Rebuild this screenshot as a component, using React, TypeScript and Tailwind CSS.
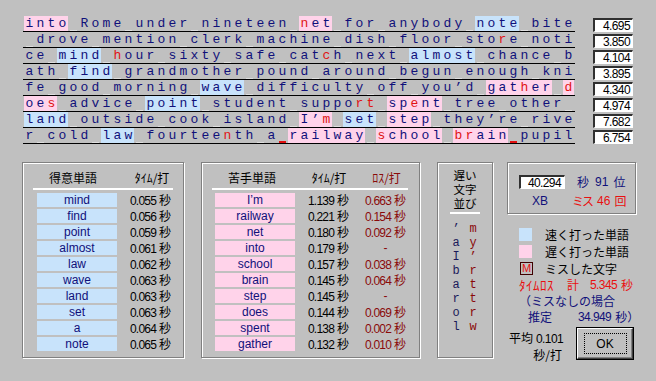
import React from "react";

type Row = {
  t: string;
  pink?: [number, number][];
  blue?: [number, number][];
  red?: number[];
  miss?: number[];
};

const rows: Row[] = [
  { t: "into Rome under nineteen net for anybody note bite", pink: [[0, 3], [25, 27]], blue: [[41, 44]], red: [25] },
  { t: " drove mention clerk machine dish floor store noti", red: [43] },
  { t: "ce mind hour sixty safe catch next almost chance b", blue: [[3, 6], [35, 40]], red: [8, 27] },
  { t: "ath find grandmother pound around begun enough kni", blue: [[4, 7]] },
  { t: "fe good morning wave difficulty off you’d gather d", blue: [[16, 19]], pink: [[42, 47], [49, 49]], red: [45, 49] },
  { t: "oes advice point student support spent tree other ", pink: [[0, 2], [33, 37]], blue: [[11, 15]], red: [2, 30, 31, 35] },
  { t: "land outside cook island I’m set step they’re rive", blue: [[0, 3], [29, 31]], pink: [[25, 27], [33, 36]], red: [27] },
  { t: "r cold law fourteenth a railway school brain pupil", blue: [[7, 9]], pink: [[24, 30], [32, 37], [39, 43]], red: [18, 32, 39, 40], miss: [23, 44] },
];

const times = ["4.695", "3.850", "4.104", "3.895", "4.340", "4.974", "7.682", "6.754"];

const good: [string, string][] = [
  ["mind", "0.055"], ["find", "0.056"], ["point", "0.059"], ["almost", "0.061"], ["law", "0.062"],
  ["wave", "0.063"], ["land", "0.063"], ["set", "0.063"], ["a", "0.064"], ["note", "0.065"],
];

const bad: [string, string, string | null][] = [
  ["I’m", "1.139", "0.663"], ["railway", "0.221", "0.154"], ["net", "0.180", "0.092"], ["into", "0.179", null],
  ["school", "0.157", "0.038"], ["brain", "0.145", "0.064"], ["step", "0.145", null], ["does", "0.144", "0.069"],
  ["spent", "0.138", "0.002"], ["gather", "0.132", "0.010"],
];

const slowL = ["’", "a", "I", "b", "a", "r", "o", "l"];
const slowR = ["m", "y", "’", "r", "t", "t", "r", "w"];

function inR(i: number, r?: [number, number][]) {
  return !!r && r.some(([a, b]) => i >= a && i <= b);
}

function TextRow({ row }: { row: Row }) {
  const chars = Array.from(row.t);
  return (
    <div className="flex h-[16px] border-b border-black px-[1px]">
      {chars.map((c, i) => {
        const pink = inR(i, row.pink);
        const blue = inR(i, row.blue);
        const red = row.red?.includes(i);
        const miss = row.miss?.includes(i);
        const bg = pink ? "bg-[#ffd3ea]" : blue ? "bg-[#c8e3fb]" : "";
        if (c === " ") {
          return (
            <span key={i} className={`flex h-[15px] w-[11px] items-end justify-center ${bg}`}>
              {miss ? (
                <span className="h-[2px] w-[7px] bg-[#e01010]" />
              ) : (
                <span className="h-[1px] w-[7px] bg-[#dedede]" />
              )}
            </span>
          );
        }
        return (
          <span
            key={i}
            className={`flex h-[15px] w-[11px] items-center justify-center leading-[15px] ${bg} ${red ? "text-[#e01414]" : "text-[#10107a]"}`}
          >
            {c}
          </span>
        );
      })}
    </div>
  );
}

const etched = "border border-[#808080] shadow-[inset_1px_1px_0_#ffffff,1px_1px_0_#ffffff]";

function Sec({ v }: { v: string }) {
  return (
    <>
      <span className="tracking-[-0.8px]">{v}</span>
      <span className="ml-[3px] font-['Noto_Sans_CJK_JP',sans-serif]">秒</span>
    </>
  );
}

export default function App() {
  return (
    <div className="h-[381px] w-[656px] overflow-hidden whitespace-nowrap bg-[#c0c0c0] font-['Liberation_Sans','Noto_Sans_CJK_JP',sans-serif] text-black">
      {/* top typing area */}
      <div className="flex pl-[23px] pt-[16px]">
        <div className="w-[552px] font-['Liberation_Mono',monospace] text-[13px]">
          {rows.map((r, i) => (
            <TextRow key={i} row={r} />
          ))}
        </div>
        <div className="ml-[18px] flex w-[40px] flex-col">
          {times.map((t, i) => (
            <div key={i} className="h-[16px] pt-[2px]">
              <div className="flex h-[14px] items-center justify-end border-b border-l-2 border-r border-t-2 border-b-white border-l-[#303030] border-r-white border-t-[#303030] bg-white pr-[2px] text-[12px] leading-[12px] tracking-[-0.6px]">
                {t}
              </div>
            </div>
          ))}
        </div>
      </div>

      {/* bottom area */}
      <div className="mt-[18px] flex pl-[22px]">
        {/* good words */}
        <div className={`h-[196px] w-[162px] ${etched}`}>
          <div className="mt-[8px] flex h-[14px] items-center text-[12px] leading-[14px]">
            <div className="ml-[10px] w-[80px] text-center font-['Noto_Sans_CJK_JP',sans-serif]">得意単語</div>
            <div className="ml-[17px] w-[44px] text-center font-['Noto_Sans_CJK_JP',sans-serif]">ﾀｲﾑ/打</div>
          </div>
          <div className="ml-[10px] mt-[3px] h-[2px] w-[140px] bg-white" />
          <div className="mt-[3px] flex flex-col">
            {good.map(([w, t], i) => (
              <div key={i} className="flex h-[16px]">
                <div className="ml-[14px] h-[14px] w-[80px] bg-[#c8e3fb] text-center text-[12px] leading-[14px] text-[#10107a]">
                  {w}
                </div>
                <div className="ml-[13px] h-[14px] text-[12px] leading-[14px]">
                  <Sec v={t} />
                </div>
              </div>
            ))}
          </div>
        </div>

        {/* bad words */}
        <div className={`ml-[17px] h-[196px] w-[219px] ${etched}`}>
          <div className="mt-[8px] flex h-[14px] items-center font-['Noto_Sans_CJK_JP',sans-serif] text-[12px] leading-[14px]">
            <div className="ml-[10px] w-[80px] text-center">苦手単語</div>
            <div className="ml-[15px] w-[44px] text-center">ﾀｲﾑ/打</div>
            <div className="ml-[14px] w-[43px] text-center text-[#8a0a0a]">ﾛｽ/打</div>
          </div>
          <div className="ml-[10px] mt-[3px] h-[2px] w-[196px] bg-white" />
          <div className="mt-[3px] flex flex-col">
            {bad.map(([w, t, l], i) => (
              <div key={i} className="flex h-[16px]">
                <div className="ml-[13px] h-[14px] w-[80px] bg-[#ffd3ea] text-center text-[12px] leading-[14px] text-[#10107a]">
                  {w}
                </div>
                <div className="ml-[13px] h-[14px] w-[44px] text-[12px] leading-[14px]">
                  <Sec v={t} />
                </div>
                <div className="ml-[13px] h-[14px] w-[43px] text-[12px] leading-[14px] text-[#8a0a0a]">
                  {l ? <Sec v={l} /> : <div className="pr-[2px] text-center">-</div>}
                </div>
              </div>
            ))}
          </div>
        </div>

        {/* slow chars */}
        <div className={`ml-[17px] h-[196px] w-[56px] ${etched}`}>
          <div className="mt-[5px] flex flex-col items-center font-['Noto_Sans_CJK_JP',sans-serif] text-[11.5px]">
            <div className="h-[14px] leading-[14px]">遅い</div>
            <div className="h-[14px] leading-[14px]">文字</div>
            <div className="h-[14px] leading-[14px]">並び</div>
          </div>
          <div className="mx-auto mt-[2px] h-[2px] w-[30px] bg-white" />
          <div className="ml-[11px] mt-[8px] flex gap-[3px] font-['Liberation_Mono',monospace] text-[12px] leading-[14px]">
            <div className="flex w-[14px] flex-col items-center text-[#1a1a5a]">
              {slowL.map((c, i) => (
                <div key={i} className="h-[14px]">{c}</div>
              ))}
            </div>
            <div className="flex w-[14px] flex-col items-center text-[#8a0a0a]">
              {slowR.map((c, i) => (
                <div key={i} className="h-[14px]">{c}</div>
              ))}
            </div>
          </div>
        </div>

        {/* right column */}
        <div className="ml-[14px] flex w-[129px] flex-col">
          <div className={`h-[52px] w-[129px] ${etched}`}>
            <div className="mt-[12px] flex h-[14px] items-center text-[12px] leading-[14px]">
              <div className="ml-[11px] flex h-[14px] w-[46px] items-center justify-end border-b border-l-2 border-r border-t-2 border-b-white border-l-[#303030] border-r-white border-t-[#303030] bg-white pr-[3px] tracking-[-0.6px]">
                40.294
              </div>
              <span className="ml-[12px] font-['Noto_Sans_CJK_JP',sans-serif] text-[#10107a]">秒</span>
              <span className="ml-[6px] text-[#10107a]">91</span>
              <span className="ml-[5px] font-['Noto_Sans_CJK_JP',sans-serif] text-[#10107a]">位</span>
            </div>
            <div className="mt-[4px] flex h-[16px] items-center text-[12px] leading-[16px]">
              <span className="ml-[24px] text-[#10107a]">XB</span>
              <span className="ml-[24px] font-['Noto_Sans_CJK_JP',sans-serif] tracking-[-2px] text-[#e81010]">ミス</span>
              <span className="ml-[5px] text-[#e81010]">46</span>
              <span className="ml-[4px] font-['Noto_Sans_CJK_JP',sans-serif] text-[#e81010]">回</span>
            </div>
          </div>

          <div className="mt-[12px] flex flex-col pl-[12px] font-['Noto_Sans_CJK_JP',sans-serif] text-[12px]">
            <div className="flex h-[17px] items-center">
              <div className="h-[13px] w-[13px] bg-[#c8e3fb]" />
              <span className="ml-[13px]">速く打った単語</span>
            </div>
            <div className="flex h-[17px] items-center">
              <div className="h-[13px] w-[13px] bg-[#ffd3ea]" />
              <span className="ml-[13px]">遅く打った単語</span>
            </div>
            <div className="flex h-[17px] items-center">
              <div className="ml-[1px] flex h-[13px] w-[13px] items-center justify-center border border-[#400000] font-['Liberation_Sans',sans-serif] text-[11px] leading-[11px] text-[#e81010]">
                M
              </div>
              <span className="ml-[12px]">ミスした文字</span>
            </div>
          </div>

          <div className="flex h-[16px] items-center pl-[12px] text-[12px] text-[#e81010]">
            <span className="font-['Noto_Sans_CJK_JP',sans-serif] text-[13px] tracking-[0.5px]">ﾀｲﾑﾛｽ</span>
            <span className="ml-[13px] font-['Noto_Sans_CJK_JP',sans-serif]">計</span>
            <span className="ml-[11px] tracking-[-0.6px]">5.345</span>
            <span className="ml-[4px] font-['Noto_Sans_CJK_JP',sans-serif]">秒</span>
          </div>
          <div className="flex h-[16px] items-center pl-[12px] font-['Noto_Sans_CJK_JP',sans-serif] text-[12px] text-[#10107a]">
            （ミスなしの場合
          </div>
          <div className="flex h-[16px] items-center pl-[21px] text-[12px] text-[#10107a]">
            <span className="font-['Noto_Sans_CJK_JP',sans-serif]">推定</span>
            <span className="ml-[26px] tracking-[-0.6px]">34.949</span>
            <span className="ml-[4px] font-['Noto_Sans_CJK_JP',sans-serif]">秒</span>
            <span className="font-['Noto_Sans_CJK_JP',sans-serif]">）</span>
          </div>

          <div className="mt-[2px] flex">
            <div className="ml-[2px] w-[53px] pt-[3px] text-right text-[12px] leading-[15px]">
              <div>
                <span className="font-['Noto_Sans_CJK_JP',sans-serif]">平均</span>
                <span className="ml-[3px] tracking-[-0.6px]">0.101</span>
              </div>
              <div className="font-['Noto_Sans_CJK_JP',sans-serif]">秒/打</div>
            </div>
            <div className="ml-[14px] h-[33px] w-[58px] border border-black bg-[#c0c0c0]">
              <div className="flex h-full w-full items-center justify-center border border-b-[#404040] border-l-white border-r-[#404040] border-t-white shadow-[inset_-1px_-1px_0_#808080]">
                <div className="flex h-[21px] w-[43px] items-center justify-center border border-dotted border-black text-[12px]">
                  OK
                </div>
              </div>
            </div>
          </div>
        </div>
      </div>
    </div>
  );
}
